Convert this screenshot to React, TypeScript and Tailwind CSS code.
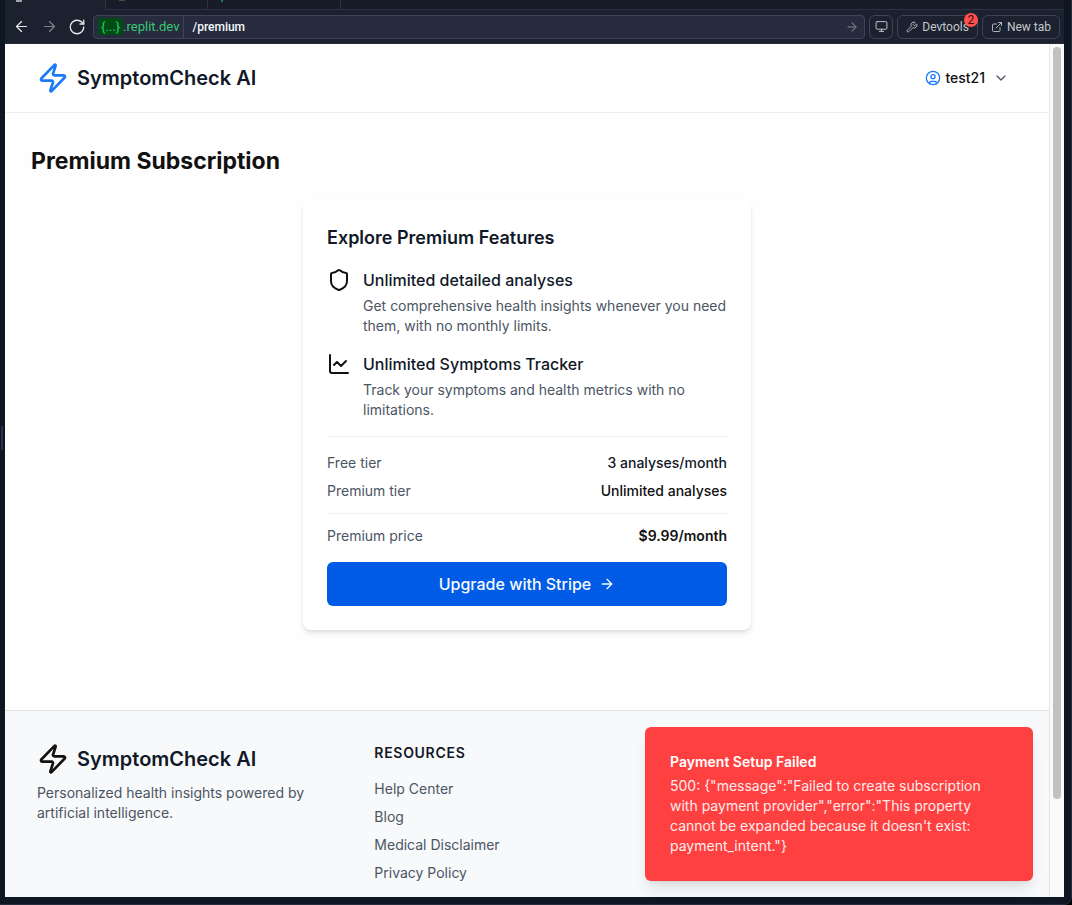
import { ArrowLeft, ArrowRight, RotateCw, Monitor, Wrench, ExternalLink, Zap, CircleUser, ChevronDown, Shield, ChartLine } from "lucide-react";

const resources = ["Help Center", "Blog", "Medical Disclaimer", "Privacy Policy"];

function TabStrip() {
  return (
    <div className="flex h-[10px] shrink-0 overflow-hidden bg-[#1b212e]">
      <div className="w-[100px] shrink-0 pl-[11px]">
        <div className="h-[2px] w-[6px] bg-[#9da2a6]" />
      </div>
      <div className="flex flex-1 border-b border-l border-[#2b3245] bg-[#171c28]">
        <div className="w-[102px] border-r border-[#2b3245] pl-[13px]">
          <div className="h-px w-[6px] bg-[#4d4a3c]" />
        </div>
        <div className="w-[133px] border-r border-[#2b3245] pl-[13px]">
          <div className="h-[2px] w-[2px] bg-[#1f7a4d]" />
        </div>
      </div>
    </div>
  );
}

function Toolbar() {
  return (
    <div className="flex h-[34px] shrink-0 items-center gap-1 border-b border-[#252c3c] bg-[#1b212e] px-1 font-['Roboto',sans-serif] text-xs text-[#c2c8cc]">
      <button aria-label="Back" className="flex size-6 items-center justify-center text-[#e4e8eb]">
        <ArrowLeft size={17} strokeWidth={1.75} />
      </button>
      <button aria-label="Forward" className="flex size-6 items-center justify-center text-[#7d838c]">
        <ArrowRight size={17} strokeWidth={1.75} />
      </button>
      <button aria-label="Reload" className="flex size-6 items-center justify-center text-[#e4e8eb]">
        <RotateCw size={18} strokeWidth={1.75} />
      </button>
      <div className="flex h-6 min-w-0 flex-1 items-center rounded-[4px] border border-[#3c445c] bg-[#262c3d]">
        <div className="flex h-full items-center border-r border-[#3c445c] px-1 text-[13px] text-[#38c872]">
          <span className="rounded-[4px] bg-[#004d13] px-[3px]">{"{...}"}</span>.replit.dev
        </div>
        <input aria-label="Path" defaultValue="/premium" className="h-full min-w-0 flex-1 bg-transparent px-2 text-xs font-medium text-[#f5f9fc] outline-none" />
        <button aria-label="Go" className="px-[5px] text-[#7d838c]">
          <ArrowRight size={14} strokeWidth={1.75} />
        </button>
      </div>
      <button aria-label="Device size" className="flex size-6 items-center justify-center rounded-[6px] border border-[#3c445c]">
        <Monitor size={13} strokeWidth={1.75} />
      </button>
      <button className="relative flex h-6 items-center gap-1 rounded-[6px] border border-[#3c445c] px-2">
        <Wrench size={12} strokeWidth={1.75} />
        Devtools
        <span className="absolute -top-[3px] -right-px flex size-[14px] items-center justify-center rounded-full bg-[#ff5050] text-xs text-[#3d0a0a]">2</span>
      </button>
      <button className="flex h-6 items-center gap-1 rounded-[6px] border border-[#3c445c] px-2">
        <ExternalLink size={12} strokeWidth={1.75} />
        New tab
      </button>
    </div>
  );
}

function Brand({ tone }: { tone: string }) {
  return (
    <a href="#home" className="flex items-center gap-2 text-xl font-semibold text-[#111827]">
      <Zap size={32} className={tone} />
      SymptomCheck AI
    </a>
  );
}

function PremiumCard() {
  return (
    <section className="mx-auto mt-[23px] max-w-md rounded-lg bg-white p-6 shadow-md">
      <h2 className="text-lg leading-7 font-semibold text-[#111827]">Explore Premium Features</h2>
      <ul className="mt-4 space-y-4">
        <li className="flex gap-3">
          <Shield size={24} className="shrink-0 text-[#111]" />
          <div>
            <h3 className="text-base font-medium text-[#111827]">Unlimited detailed analyses</h3>
            <p className="mt-1 text-sm text-[#4b5563]">Get comprehensive health insights whenever you need them, with no monthly limits.</p>
          </div>
        </li>
        <li className="flex gap-3">
          <ChartLine size={24} className="shrink-0 text-[#111]" />
          <div>
            <h3 className="text-base font-medium text-[#111827]">Unlimited Symptoms Tracker</h3>
            <p className="mt-1 text-sm text-[#4b5563]">Track your symptoms and health metrics with no limitations.</p>
          </div>
        </li>
      </ul>
      <dl className="mt-4 space-y-2 border-t border-[#f0f0f0] pt-4 text-sm">
        <div className="flex justify-between">
          <dt className="text-[#4b5563]">Free tier</dt>
          <dd className="font-medium text-[#111827]">3 analyses/month</dd>
        </div>
        <div className="flex justify-between">
          <dt className="text-[#4b5563]">Premium tier</dt>
          <dd className="font-medium text-[#111]">Unlimited analyses</dd>
        </div>
      </dl>
      <dl className="mt-3 flex justify-between border-t border-[#f0f0f0] pt-3 text-sm">
        <dt className="text-[#4b5563]">Premium price</dt>
        <dd className="font-semibold text-[#111]">$9.99/month</dd>
      </dl>
      <button className="mt-4 flex h-11 w-full items-center justify-center gap-2 rounded-md bg-[#005ce6] text-base font-medium text-[#f5faff]">
        Upgrade with Stripe
        <ArrowRight size={16} />
      </button>
    </section>
  );
}

function Toast() {
  return (
    <div role="alert" className="absolute right-4 bottom-4 w-[388px] rounded-md bg-[#ff4040] py-6 pr-8 pl-[25px] text-sm text-white shadow-lg">
      <p className="pt-px font-semibold">Payment Setup Failed</p>
      <p className="mt-1 pb-px opacity-90">{`500: {"message":"Failed to create subscription with payment provider","error":"This property cannot be expanded because it doesn't exist: payment_intent."}`}</p>
    </div>
  );
}

export default function App() {
  return (
    <div className="h-screen bg-black">
      <div className="relative flex h-full flex-col overflow-hidden rounded-br-lg border-r border-b border-[#252c3c] bg-[#0e1621] pr-[7px] pb-[7px] pl-[5px] font-['Inter',sans-serif]">
        <div className="absolute top-[426px] left-px h-6 w-[2px] bg-[#2b3245]" />
        <TabStrip />
        <Toolbar />
        <div className="flex min-h-0 flex-1 bg-[#fefefe]">
          <div className="relative flex min-w-0 flex-1 flex-col overflow-hidden">
            <header className="flex items-center justify-between border-b border-[#f0f0f0] bg-white px-8 py-[18px]">
              <Brand tone="text-[#1a7af8]" />
              <button className="flex items-center gap-1 px-2 text-sm font-medium text-[#111]">
                <CircleUser size={16} className="text-[#1a7af8]" />
                test21
                <ChevronDown size={16} className="ml-1 text-[#4b5563]" />
              </button>
            </header>
            <main className="px-[26px] pt-8 pb-20">
              <h1 className="text-[23px] leading-8 font-bold text-[#111]">Premium Subscription</h1>
              <PremiumCard />
            </main>
            <footer className="grid flex-1 grid-cols-3 gap-8 border-t border-[#e1e3e5] bg-[#f8f9fb] px-8 pt-8">
              <div>
                <Brand tone="text-[#111]" />
                <p className="mt-2 text-sm text-[#4b5563]">Personalized health insights powered by artificial intelligence.</p>
              </div>
              <div>
                <h2 className="text-sm font-semibold tracking-wider text-[#111827]">RESOURCES</h2>
                <ul className="mt-4 space-y-2 text-sm text-[#4b5563]">
                  {resources.map((name) => (
                    <li key={name}>
                      <a href="#resources">{name}</a>
                    </li>
                  ))}
                </ul>
              </div>
            </footer>
            <Toast />
          </div>
          <div className="w-[15px] shrink-0 border-l border-[#e6e6e6] bg-[#fafafa] px-[3px] pt-[3px]">
            <div className="h-[752px] rounded-full bg-[#c1c1c1]" />
          </div>
        </div>
      </div>
    </div>
  );
}
